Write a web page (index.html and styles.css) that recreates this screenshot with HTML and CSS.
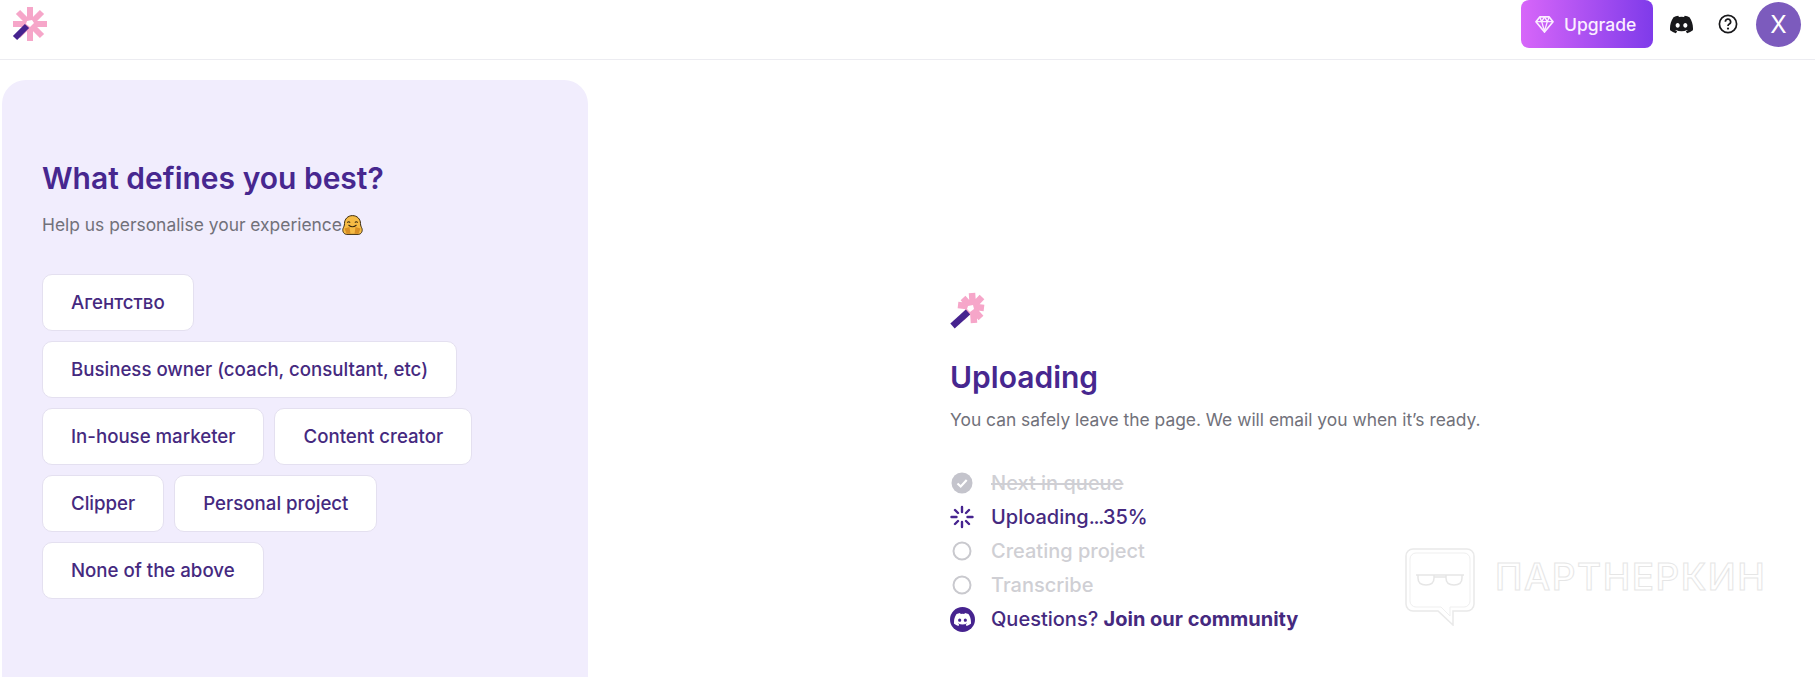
FILE: index.html
```html
<!DOCTYPE html>
<html lang="en">
<head>
    <meta charset="UTF-8">
    <meta name="viewport" content="width=device-width, initial-scale=1.0">
    <title>Uploading</title>
    <link rel="stylesheet" href="styles.css">
</head>
<body>
    <svg class="sprites" width="0" height="0" aria-hidden="true">
        <symbol id="discord" viewBox="0 0 24 24">
            <path fill="currentColor" d="M20.317 4.37a19.791 19.791 0 0 0-4.885-1.515.074.074 0 0 0-.079.037c-.21.375-.444.864-.608 1.25a18.27 18.27 0 0 0-5.487 0 12.64 12.64 0 0 0-.617-1.25.077.077 0 0 0-.079-.037A19.736 19.736 0 0 0 3.677 4.37a.07.07 0 0 0-.032.027C.533 9.046-.32 13.58.099 18.057a.082.082 0 0 0 .031.057 19.9 19.9 0 0 0 5.993 3.03.078.078 0 0 0 .084-.028 14.09 14.09 0 0 0 1.226-1.994.076.076 0 0 0-.041-.106 13.107 13.107 0 0 1-1.872-.892.077.077 0 0 1-.008-.128 10.2 10.2 0 0 0 .372-.292.074.074 0 0 1 .077-.01c3.928 1.793 8.18 1.793 12.062 0a.074.074 0 0 1 .078.01c.12.098.246.198.373.292a.077.077 0 0 1-.006.127 12.299 12.299 0 0 1-1.873.892.077.077 0 0 0-.041.107c.36.698.772 1.362 1.225 1.993a.076.076 0 0 0 .084.028 19.839 19.839 0 0 0 6.002-3.03.077.077 0 0 0 .032-.054c.5-5.177-.838-9.674-3.549-13.66a.061.061 0 0 0-.031-.03zM8.02 15.33c-1.183 0-2.157-1.085-2.157-2.419 0-1.333.956-2.419 2.157-2.419 1.21 0 2.176 1.096 2.157 2.42 0 1.333-.956 2.418-2.157 2.418zm7.975 0c-1.183 0-2.157-1.085-2.157-2.419 0-1.333.955-2.419 2.157-2.419 1.21 0 2.176 1.096 2.157 2.42 0 1.333-.946 2.418-2.157 2.418z"/>
        </symbol>
    </svg>

    <header class="topbar">
        <svg class="logo" viewBox="0 0 36 36" width="36" height="36">
            <g stroke="#f6a6c9" stroke-width="6">
                <path d="M18 0v34M1 17h34M6 5l24 24M30 5L6 29"/>
            </g>
            <path d="M15 14l5-1 2 3-4 4-4-3z" fill="#fff"/>
            <path d="M3 31L15 19" stroke="#46238f" stroke-width="6"/>
        </svg>
        <div class="topbar-actions">
            <button class="upgrade-btn">
                <svg class="diamond" viewBox="0 0 20 18" width="19" height="17">
                    <path d="M5 1h10l4 5-9 11L1 6z" fill="none" stroke="currentColor" stroke-width="1.8" stroke-linejoin="round"/>
                    <path d="M1 6h18M7 6l3 10 3-10M5 1l2 5 3-5 3 5 2-5" fill="none" stroke="currentColor" stroke-width="1.4"/>
                </svg>
                Upgrade
            </button>
            <svg class="discord-link" width="23" height="23"><use href="#discord"/></svg>
            <svg class="help-link" viewBox="0 0 20 20" width="20" height="20">
                <circle cx="10" cy="10" r="8.6" fill="none" stroke="currentColor" stroke-width="1.7"/>
                <path d="M7.4 7.8a2.6 2.6 0 1 1 3.9 2.2c-.8.5-1.3 1-1.3 1.9" fill="none" stroke="currentColor" stroke-width="1.7"/>
                <circle cx="10" cy="14.6" r="1.1" fill="currentColor"/>
            </svg>
            <div class="avatar">X</div>
        </div>
    </header>

    <main class="layout">
        <section class="survey">
            <h2>What defines you best?</h2>
            <p class="survey-sub">Help us personalise your experience<svg class="hug" viewBox="0 0 21 20" width="21" height="20">
                    <path d="M10.500 .6c4.600 0 8 3.400 8 8 0 2 .9 3.400 1.500 5 .8 2.700-.8 5.800-3.800 5.800H4.800c-3 0-4.600-3.100-3.800-5.800.6-1.600 1.500-3 1.500-5 0-4.600 3.400-8 8-8z" fill="#f5bb45" stroke="#3d2c10"/>
                    <path d="M5.300 7.600q1.400-1.800 2.800 0M12.900 7.600q1.400-1.800 2.800 0M6.500 10q4 3.400 8 0" fill="none" stroke="#3d2c10" stroke-width="1.100"/>
                    <path d="M2.500 13.500l5-1.500 1 6.800H4.500zM18.500 13.500l-5-1.500-1 6.800h4z" fill="#d98f24"/>
                </svg></p>
            <div class="options">
                <button class="option">Агентство</button>
                <button class="option">Business owner (coach, consultant, etc)</button>
                <button class="option">In-house marketer</button>
                <button class="option">Content creator</button>
                <button class="option">Clipper</button>
                <button class="option">Personal project</button>
                <button class="option">None of the above</button>
            </div>
        </section>

        <section class="status">
            <svg class="wand" viewBox="0 0 36 38" width="36" height="38">
                <g stroke="#f6a6c9" stroke-width="6.500">
                    <path d="M22 1l2 30M8 13l26 3M13 6l18 20M32 5L12 26"/>
                </g>
                <path d="M18 14l5-1 1 4-4 3-3-3z" fill="#fff"/>
                <path d="M2.500 34L18 20" stroke="#46238f" stroke-width="6.500"/>
            </svg>
            <h1>Uploading</h1>
            <p class="status-sub">You can safely leave the page. We will email you when it’s ready.</p>
            <ul class="steps">
                <li class="step step-off step-done">
                    <svg class="step-icon" viewBox="0 0 24 24" width="24" height="24">
                        <circle cx="12" cy="12" r="10.500" fill="#c4c4cc"/>
                        <path d="M7.500 12.500l3.200 3 6-6.500" fill="none" stroke="#fff" stroke-width="2.200"/>
                    </svg>
                    <span>Next in queue</span>
                </li>
                <li class="step">
                    <svg class="step-icon" viewBox="0 0 24 24" width="24" height="24">
                        <path d="M12 2v5M12 17v5M1.500 12h5M17.500 12h5M5 5l3 3M16 16l3 3M19 5l-3 3M8 16l-3 3" fill="none" stroke="#46238f" stroke-width="2.400" stroke-linecap="round"/>
                    </svg>
                    <span>Uploading<span class="dots">...</span>35%</span>
                </li>
                <li class="step step-off">
                    <svg class="step-icon" viewBox="0 0 24 24" width="24" height="24">
                        <circle cx="12" cy="12" r="8.500" fill="none" stroke="#c9c9ce" stroke-width="2"/>
                    </svg>
                    <span>Creating project</span>
                </li>
                <li class="step step-off">
                    <svg class="step-icon" viewBox="0 0 24 24" width="24" height="24">
                        <circle cx="12" cy="12" r="8.500" fill="none" stroke="#c9c9ce" stroke-width="2"/>
                    </svg>
                    <span>Transcribe</span>
                </li>
                <li class="step">
                    <span class="discord-badge"><svg width="17" height="17"><use href="#discord"/></svg></span>
                    <span>Questions? <b>Join our community</b></span>
                </li>
            </ul>
        </section>
    </main>

    <div class="watermark">
        <svg viewBox="0 0 70 78" width="70" height="78">
            <path d="M8 1h54a7 7 0 0 1 7 7v48a7 7 0 0 1-7 7H48v14L33 63H8a7 7 0 0 1-7-7V8a7 7 0 0 1 7-7z" fill="#fff" stroke="#e9e9e9" stroke-width="1.500"/>
            <path d="M11 5h48a6 6 0 0 1 6 6v42a6 6 0 0 1-6 6H45v9L36 59H11a6 6 0 0 1-6-6V11a6 6 0 0 1 6-6z" fill="none" stroke="#efefef"/>
            <path d="M11 27h48M13 27v3q0 7 8 7t8-7v-3M41 27v3q0 7 8 7t8-7v-3M29 29h12" fill="none" stroke="#e6e6e6" stroke-width="1.500"/>
        </svg>
        <span>ПАРТНЕРКИН</span>
    </div>
</body>
</html>
```

FILE: styles.css
```css
* {
    box-sizing: border-box;
}
body, html {
    margin: 0;
    padding: 0;
    height: 100%;
    overflow: hidden;
    background-color: #fff;
    font-family: 'Inter', sans-serif;
}
.sprites {
    position: absolute;
}
.topbar {
    display: flex;
    align-items: flex-start;
    justify-content: space-between;
    height: 60px;
    padding: 7px 14px 0 12px;
    border-bottom: 1px solid #ececf1;
}
.topbar-actions {
    display: flex;
    align-items: center;
    margin-top: -7px;
}
.upgrade-btn {
    display: flex;
    align-items: center;
    gap: 10px;
    width: 132px;
    height: 48px;
    padding: 0 0 0 14px;
    border: none;
    border-radius: 8px;
    background: linear-gradient(90deg, #d766f9, #7f3bea);
    color: #fbeeff;
    font-family: inherit;
    font-size: 17.500px;
    font-weight: 500;
}
.discord-link {
    margin-left: 17px;
    color: #18181b;
}
.help-link {
    margin-left: 25px;
    color: #18181b;
}
.avatar {
    display: flex;
    align-items: center;
    justify-content: center;
    width: 45px;
    height: 45px;
    margin-left: 18px;
    border-radius: 50%;
    background-color: #7c5bbd;
    color: #fff;
    font-size: 24px;
}
.layout {
    display: flex;
    height: 617px;
}
.survey {
    width: 586px;
    margin: 20px 0 0 2px;
    padding: 78px 40px 0;
    border-radius: 24px 24px 0 0;
    background-color: #f1edfd;
}
.survey h2 {
    margin: 0;
    color: #47278f;
    font-size: 30px;
    font-weight: 600;
    line-height: 40px;
}
.survey-sub {
    display: flex;
    align-items: center;
    margin: 15px 0 0;
    color: #71717a;
    font-size: 17.400px;
    line-height: 24px;
}
.options {
    display: flex;
    flex-wrap: wrap;
    gap: 10px;
    max-width: 450px;
    margin-top: 37px;
}
.option {
    height: 57px;
    padding: 0 28px 2px;
    border: 1px solid #e4e0f0;
    border-radius: 10px;
    background-color: #fff;
    color: #45297f;
    font-family: inherit;
    font-size: 18.650px;
    font-weight: 500;
}
.status {
    display: flex;
    flex-direction: column;
    align-items: flex-start;
    padding: 232px 0 0 362px;
}
.status h1 {
    margin: 27px 0 0;
    color: #47278f;
    font-size: 30px;
    font-weight: 600;
    line-height: 40px;
}
.status-sub {
    margin: 11px 0 0;
    color: #71717a;
    font-size: 17.400px;
    line-height: 24px;
}
.steps {
    margin: 34px 0 0;
    padding: 0;
    list-style: none;
}
.step {
    display: flex;
    align-items: center;
    gap: 17px;
    height: 34px;
    color: #45297f;
    font-size: 20px;
    font-weight: 500;
}
.step b {
    font-weight: 700;
}
.step-off {
    color: #cfcfd4;
}
.step-done span {
    text-decoration: line-through;
}
.step-icon {
    flex: none;
}
.dots {
    letter-spacing: -1.300px;
}
.discord-badge {
    display: flex;
    align-items: center;
    justify-content: center;
    width: 25px;
    height: 25px;
    margin: 0 -1px -1px 0;
    border-radius: 50%;
    background-color: #46238f;
    color: #fff;
}
/* stamped over the corner of the screenshot */
.watermark {
    position: absolute;
    left: 1405px;
    top: 548px;
    display: flex;
    align-items: center;
    gap: 20px;
}
.watermark span {
    margin-top: -22px;
    color: transparent;
    -webkit-text-stroke: 1px #e6e6e6;
    font-size: 37px;
    font-weight: 500;
    letter-spacing: 1.500px;
}
```
